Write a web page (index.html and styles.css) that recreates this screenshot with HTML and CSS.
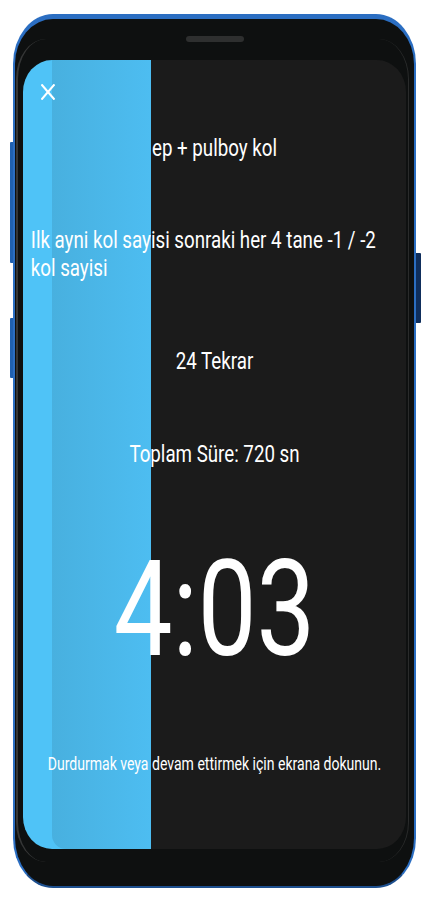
FILE: index.html
```html
<!DOCTYPE html>
<html lang="tr">
<head>
<meta charset="utf-8">
<title>Antrenman</title>
<link rel="stylesheet" href="styles.css">
</head>
<body>
<div class="device">
  <span class="side-btn side-btn--l1"></span>
  <span class="side-btn side-btn--l2"></span>
  <span class="side-btn side-btn--r1"></span>
  <div class="phone">
    <div class="earpiece-bar"><span class="earpiece"></span></div>
    <div class="screen">
      <div class="progress"></div>
      <div class="content">
        <svg class="close" width="18" height="16" viewBox="0 0 18 16" aria-label="Kapat">
          <line x1="1.5" y1="1.2" x2="16.5" y2="14.8" stroke="#fff" stroke-width="2.4" stroke-linecap="square"/>
          <line x1="16.5" y1="1.2" x2="1.5" y2="14.8" stroke="#fff" stroke-width="2.4" stroke-linecap="square"/>
        </svg>
        <p class="title">ep + pulboy kol</p>
        <p class="desc">Ilk ayni kol sayisi sonraki her 4 tane -1 / -2 kol sayisi</p>
        <p class="reps">24 Tekrar</p>
        <p class="total">Toplam Süre: 720 sn</p>
        <p class="timer">4:03</p>
        <p class="hint">Durdurmak veya devam ettirmek için ekrana dokunun.</p>
      </div>
    </div>
  </div>
</div>
</body>
</html>
```

FILE: styles.css
```css
html, body {
  margin: 0;
  padding: 0;
  background: #ffffff;
}
body {
  width: 437px;
  height: 904px;
  overflow: hidden;
  font-family: Roboto, "Noto Sans", sans-serif;
}
.device {
  position: relative;
  padding: 14px 21px 16px 13px;
}
.side-btn {
  position: absolute;
  display: block;
  border-radius: 1px;
}
.side-btn--l1 {
  left: 10px;
  top: 142px;
  width: 4px;
  height: 121px;
  background: #2061b0;
}
.side-btn--l2 {
  left: 10px;
  top: 318px;
  width: 4px;
  height: 60px;
  background: #2061b0;
}
.side-btn--r1 {
  left: 415px;
  top: 253px;
  width: 6px;
  height: 70px;
  background: #0f2e5c;
}
.phone {
  position: relative;
  box-sizing: border-box;
  height: 874px;
  background: #0e1010;
  border: 2px solid #2b6ec2;
  border-top-width: 5px;
  border-bottom-color: #1d4f8e;
  border-radius: 40px / 50px;
  display: flex;
  flex-direction: column;
  align-items: center;
}
.phone::before {
  content: "";
  position: absolute;
  top: 20px;
  bottom: 24px;
  left: 1px;
  right: 5px;
  border-left: 2px solid #353636;
  border-right: 1px solid #2a2b2b;
  border-radius: 30px / 40px;
  pointer-events: none;
}
.earpiece-bar {
  height: 41px;
  width: 100%;
  display: flex;
  justify-content: center;
}
.earpiece {
  display: block;
  margin-top: 17px;
  width: 58px;
  height: 6px;
  border-radius: 3px;
  background: #2e2f2f;
}
.screen {
  position: relative;
  width: 383px;
  height: 789px;
  background: #1b1b1b;
  border-radius: 29px / 32px;
  overflow: hidden;
}
.progress {
  position: absolute;
  left: 0;
  top: 0;
  bottom: 0;
  width: 128px;
  background: #4fc3f7;
}
.progress::after {
  content: "";
  position: absolute;
  left: 29px;
  top: 0;
  right: 0;
  bottom: 0;
  background: linear-gradient(to right, #48b0df, #4dbdf1);
  border-bottom-left-radius: 14px;
}
.content {
  position: relative;
  z-index: 1;
  box-sizing: border-box;
  width: 491px;
  padding: 24px 10px 0;
  transform: scaleX(0.78);
  transform-origin: 0 0;
  display: flex;
  flex-direction: column;
  align-items: center;
  color: #ffffff;
}
.content p {
  margin: 0;
}
.close {
  display: block;
  align-self: flex-start;
  margin-left: 13px;
}
.title,
.desc,
.reps,
.total {
  font-size: 24px;
  line-height: 28px;
  text-align: center;
}
.title {
  margin-top: 34px !important;
}
.desc {
  align-self: stretch;
  text-align: left;
  margin-top: 64px !important;
}
.reps {
  margin-top: 65px !important;
}
.total {
  margin-top: 65px !important;
}
.timer {
  font-size: 134px;
  line-height: 134px;
  margin-top: 75px !important;
}
.hint {
  font-size: 18px;
  line-height: 22px;
  margin-top: 76px !important;
  text-align: center;
}
```
